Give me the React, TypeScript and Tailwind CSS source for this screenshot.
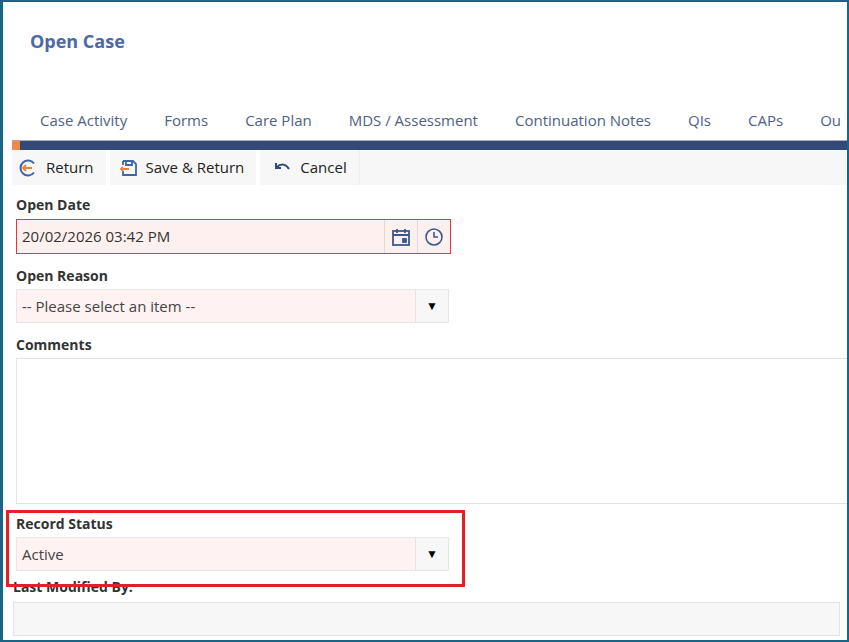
import React from "react";

const F = { fontFamily: '"Open Sans", sans-serif' };

function Caret() {
  return <div className="w-[33px] border-l border-[#e3e3e3] bg-[#f7f7f7] flex items-center justify-center text-black text-[12px]">▼</div>;
}

export default function App() {
  const tabs = ["Case Activity", "Forms", "Care Plan", "MDS / Assessment", "Continuation Notes", "QIs", "CAPs", "Ou"];
  return (
    <div style={F} className="w-[849px] h-[642px] overflow-hidden bg-white border-t-2 border-l-[3px] border-r-2 border-b-2 border-[#1a6585] relative">
      <div className="pl-[27px] pt-[26px] h-[93px] text-[18px] font-bold text-[#4b69a3]">Open Case</div>
      <div className="flex pl-[37px] gap-[37px] h-[50px] items-center text-[15px] text-[#4e6186] whitespace-nowrap overflow-hidden">
        {tabs.map(t => <span key={t}>{t}</span>)}
      </div>
      <div className="-mt-[5px] ml-[9px] h-[10px] bg-[#334a78] border-t border-[#aab] flex"><div className="w-[8px] bg-[#f08a4b]" /></div>
      <div className="ml-[9px] h-[35px] bg-[#f7f7f7] flex text-[15px] text-[#222]">
        <div className="flex items-center gap-[8px] pl-[6px] pr-[12px] border-r-[4px] border-white">
          <svg width="20" height="20" viewBox="0 0 20 20" fill="none" stroke="#3f64a8" strokeWidth="2"><path d="M16 5.5A7.5 7.5 0 1 0 16 14.5" /><path d="M14 10H5M8 7l-3 3 3 3" stroke="#e8853a" /></svg>
          Return
        </div>
        <div className="flex items-center gap-[8px] pl-[10px] pr-[12px] border-r-[4px] border-white">
          <svg width="18" height="18" viewBox="0 0 18 18" fill="none" stroke="#3f64a8" strokeWidth="1.8"><path d="M3 2h10l3 3v11H3v-4M3 6V2" /><path d="M6 2v4h6V2" /><path d="M9 10H1M3 8l-2 2 2 2" stroke="#e8853a" /></svg>
          Save &amp; Return
        </div>
        <div className="flex items-center gap-[8px] pl-[14px] pr-[12px] border-r border-[#eee]">
          <svg width="18" height="14" viewBox="0 0 18 14" fill="none" stroke="#2d4a7a" strokeWidth="2"><path d="M3 6c4-4 9-3 12 2" /><path d="M2 2v5h5" /></svg>
          Cancel
        </div>
      </div>
      <div className="pl-[13px] text-[14px]">
        <div className="font-bold text-[#333] mt-[9px] h-[20px]">Open Date</div>
        <div className="mt-[5px] w-[435px] h-[35px] border border-[#ee3535] bg-[#fff0f0] flex">
          <div className="flex-1 flex items-center pl-[5px] text-[#333] text-[15px]">20/02/2026 03:42 PM</div>
          <div className="w-[33px] border-l border-[#e6d6d6] flex items-center justify-center">
            <svg width="20" height="20" viewBox="0 0 20 20" fill="none" stroke="#3a5a8e" strokeWidth="1.8"><rect x="2" y="4" width="16" height="14" /><path d="M2 8h16M6 2v4M14 2v4" /><rect x="12" y="12" width="3" height="3" fill="#3a5a8e" /></svg>
          </div>
          <div className="w-[33px] border-l border-[#e6d6d6] flex items-center justify-center">
            <svg width="20" height="20" viewBox="0 0 20 20" fill="none" stroke="#3a5a8e" strokeWidth="1.6"><circle cx="10" cy="10" r="8" /><path d="M10 5v5h4" /></svg>
          </div>
        </div>
        <div className="font-bold text-[#333] mt-[11px] h-[20px]">Open Reason</div>
        <div className="mt-[4px] w-[433px] h-[34px] border border-[#e6e6e6] bg-[#fff2f2] flex">
          <div className="flex-1 flex items-center pl-[5px] text-[#444] text-[15px]">-- Please select an item --</div>
          <Caret />
        </div>
        <div className="font-bold text-[#333] mt-[11px] h-[20px]">Comments</div>
        <div className="mt-[4px] w-[860px] h-[146px] border border-[#e3e3e3] bg-white" />
        <div className="absolute left-[3px] top-[508px] w-[459px] h-[77px] border-[3px] border-[#e32026]" />
        <div className="font-bold text-[#333] mt-[9px] h-[20px]">Record Status</div>
        <div className="mt-[4px] w-[433px] h-[34px] border border-[#e6e6e6] bg-[#fff2f2] flex">
          <div className="flex-1 flex items-center pl-[5px] text-[#444] text-[15px]">Active</div>
          <Caret />
        </div>
        <div className="font-bold text-[#333] mt-[5px] h-[20px] -ml-[3px]">Last Modified By:</div>
        <div className="mt-[6px] -ml-[3px] w-[827px] h-[34px] border border-[#e3e3e3] bg-[#f7f7f7]" />
      </div>
    </div>
  );
}
